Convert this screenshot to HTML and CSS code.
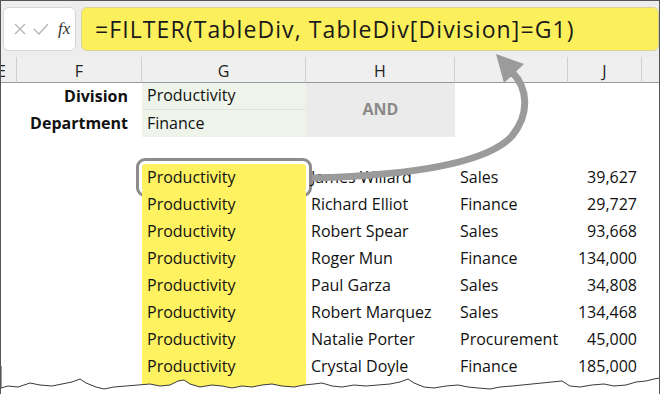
FILE: index.html
```html
<!DOCTYPE html>
<html lang="en">
<head>
    <meta charset="UTF-8">
    <meta name="viewport" content="width=device-width, initial-scale=1.0">
    <title>FILTER with AND</title>
    <link rel="stylesheet" href="styles.css">
</head>
<body>
    <div class="sheet">
        <div class="formula-bar">
            <div class="fx-box">
                <svg class="icon" width="14" height="14" viewBox="0 0 14 14">
                    <path d="M2 2 L12 12 M12 2 L2 12" stroke="#b4b4b4" stroke-width="1.3" fill="none" />
                </svg>
                <svg class="icon" width="16" height="14" viewBox="0 0 16 14">
                    <path d="M1 7 L6 12 L15 2" stroke="#b4b4b4" stroke-width="1.3" fill="none" />
                </svg>
                <span class="fx">fx</span>
            </div>
            <div class="formula">=FILTER(TableDiv, TableDiv[Division]=G1)</div>
        </div>

        <div class="grid">
            <div class="col-head e">E</div>
            <div class="col-head">F</div>
            <div class="col-head">G</div>
            <div class="col-head">H</div>
            <div class="col-head">I</div>
            <div class="col-head">J</div>
            <div class="col-head last"></div>

            <div class="cell"></div>
            <div class="cell label">Division</div>
            <div class="cell crit top">Productivity</div>
            <div class="cell and">AND</div>
            <div class="cell"></div>
            <div class="cell"></div>
            <div class="cell"></div>

            <div class="cell"></div>
            <div class="cell label">Department</div>
            <div class="cell crit">Finance</div>
            <div class="cell"></div>
            <div class="cell"></div>
            <div class="cell"></div>

            <div class="cell"></div><div class="cell"></div><div class="cell"></div><div class="cell"></div><div class="cell"></div><div class="cell"></div><div class="cell"></div>

            <div class="cell"></div><div class="cell"></div>
            <div class="cell hit selected">Productivity</div>
            <div class="cell">James Willard</div>
            <div class="cell">Sales</div>
            <div class="cell num">39,627</div>
            <div class="cell"></div>

            <div class="cell"></div><div class="cell"></div>
            <div class="cell hit">Productivity</div>
            <div class="cell">Richard Elliot</div>
            <div class="cell">Finance</div>
            <div class="cell num">29,727</div>
            <div class="cell"></div>

            <div class="cell"></div><div class="cell"></div>
            <div class="cell hit">Productivity</div>
            <div class="cell">Robert Spear</div>
            <div class="cell">Sales</div>
            <div class="cell num">93,668</div>
            <div class="cell"></div>

            <div class="cell"></div><div class="cell"></div>
            <div class="cell hit">Productivity</div>
            <div class="cell">Roger Mun</div>
            <div class="cell">Finance</div>
            <div class="cell num">134,000</div>
            <div class="cell"></div>

            <div class="cell"></div><div class="cell"></div>
            <div class="cell hit">Productivity</div>
            <div class="cell">Paul Garza</div>
            <div class="cell">Sales</div>
            <div class="cell num">34,808</div>
            <div class="cell"></div>

            <div class="cell"></div><div class="cell"></div>
            <div class="cell hit">Productivity</div>
            <div class="cell">Robert Marquez</div>
            <div class="cell">Sales</div>
            <div class="cell num">134,468</div>
            <div class="cell"></div>

            <div class="cell"></div><div class="cell"></div>
            <div class="cell hit">Productivity</div>
            <div class="cell">Natalie Porter</div>
            <div class="cell">Procurement</div>
            <div class="cell num">45,000</div>
            <div class="cell"></div>

            <div class="cell"></div><div class="cell"></div>
            <div class="cell hit">Productivity</div>
            <div class="cell">Crystal Doyle</div>
            <div class="cell">Finance</div>
            <div class="cell num">185,000</div>
            <div class="cell"></div>

            <div class="cell"></div><div class="cell"></div>
            <div class="cell hit"></div>
            <div class="cell"></div><div class="cell"></div><div class="cell"></div><div class="cell"></div>
        </div>

        <!-- curved arrow from the spill cell up to the formula -->
        <svg class="arrow" width="660" height="394" viewBox="0 0 660 394">
            <path d="M312 178 C 420 175, 488 162, 512 136 C 530 114, 528 88, 512 72" stroke="#9b9b9b" stroke-width="7" fill="none" />
            <polygon points="496,54 524,64 504,83" fill="#9b9b9b" />
        </svg>

        <!-- torn paper edge -->
        <svg class="tear" width="662" height="30" viewBox="0 0 662 30">
            <path d="M0 22 L8 20 L18 21 L30 17 L40 19 L52 20 L62 18 L72 16 L80 13 L86 17 L96 21 L104 23 L114 21 L126 20 L138 19 L150 18 L160 20 L170 19 L178 15 L184 14 L190 18 L200 21 L212 19 L222 20 L232 22 L242 20 L252 21 L262 19 L272 18 L282 20 L294 21 L304 19 L314 18 L322 17 L332 20 L342 21 L354 19 L366 20 L378 19 L390 18 L400 16 L408 13 L414 17 L424 21 L434 22 L446 20 L458 19 L468 21 L478 22 L490 23 L500 21 L512 20 L522 19 L532 18 L542 17 L552 16 L562 15 L570 20 L580 21 L592 19 L604 18 L614 20 L626 19 L636 16 L646 15 L654 13 L660 12 L662 30 L0 30 Z" fill="#fff" stroke="none" />
            <path d="M1 0 L1 22 L8 20 L18 21 L30 17 L40 19 L52 20 L62 18 L72 16 L80 13 L86 17 L96 21 L104 23 L114 21 L126 20 L138 19 L150 18 L160 20 L170 19 L178 15 L184 14 L190 18 L200 21 L212 19 L222 20 L232 22 L242 20 L252 21 L262 19 L272 18 L282 20 L294 21 L304 19 L314 18 L322 17 L332 20 L342 21 L354 19 L366 20 L378 19 L390 18 L400 16 L408 13 L414 17 L424 21 L434 22 L446 20 L458 19 L468 21 L478 22 L490 23 L500 21 L512 20 L522 19 L532 18 L542 17 L552 16 L562 15 L570 20 L580 21 L592 19 L604 18 L614 20 L626 19 L636 16 L646 15 L654 13 L660 12 L660 0" fill="none" stroke="#3a3a3a" stroke-width="1" />
        </svg>
    </div>
</body>
</html>
```

FILE: styles.css
```css
* {
    padding: 0;
    margin: 0;
    box-sizing: border-box;
}
body {
    background-color: #fff;
    font-family: "Open Sans", "Noto Sans", sans-serif;
    color: #111;
}
.sheet {
    position: relative;
    width: 660px;
    height: 394px;
    overflow: hidden;
    border: 1px solid #555;
    border-bottom: none;
    background-color: #fff;
}
.formula-bar {
    display: flex;
    gap: 5px;
    height: 56px;
    padding: 6px 0 6px 2px;
    background-color: #ededed;
}
.fx-box {
    display: flex;
    align-items: center;
    gap: 6px;
    width: 73px;
    padding-left: 9px;
    background-color: #fff;
    border: 1px solid #d6d6d6;
    border-radius: 6px;
}
.fx {
    margin-left: 3px;
    font-family: "Liberation Serif", serif;
    font-style: italic;
    font-size: 17px;
    color: #333;
}
.formula {
    flex: 1;
    display: flex;
    align-items: center;
    padding-left: 13px;
    font-size: 23px;
    letter-spacing: 1.1px;
    color: #1a1a1a;
    background-color: #fcef5c;
    border: 1px solid #d9d29a;
    border-radius: 6px;
}
.grid {
    display: grid;
    grid-template-columns: 16px 125px 164px 149px 113px 74px 1fr;
    grid-template-rows: 26px;
    grid-auto-rows: 27px;
}
.col-head {
    display: flex;
    align-items: center;
    justify-content: center;
    font-size: 16px;
    color: #222;
    background-color: #efefef;
    border-right: 1px solid #cfcfcf;
    border-bottom: 1px solid #9a9a9a;
    padding-top: 2px;
}
.col-head.e {
    justify-content: flex-end;
    padding-right: 10px;
}
.col-head.last {
    border-right: none;
}
.cell {
    display: flex;
    align-items: center;
    padding: 0 5px 2px;
    font-size: 16px;
    white-space: nowrap;
}
.label {
    justify-content: flex-end;
    font-weight: 700;
    padding-right: 14px;
}
.crit {
    background-color: #eef4ea;
}
.crit.top {
    border-bottom: 1px solid #dde6d8;
}
.and {
    grid-row: span 2;
    justify-content: center;
    font-weight: 700;
    color: #8a8a8a;
    background-color: #ebebeb;
}
.hit {
    background-color: #fff261;
}
.selected {
    outline: 3px solid #8c8c8c;
    outline-offset: 3px;
    border-radius: 3px;
}
.num {
    justify-content: flex-end;
}
.arrow {
    position: absolute;
    left: -1px;
    top: -1px;
}
.tear {
    position: absolute;
    left: -1px;
    top: 365px;
}
```
